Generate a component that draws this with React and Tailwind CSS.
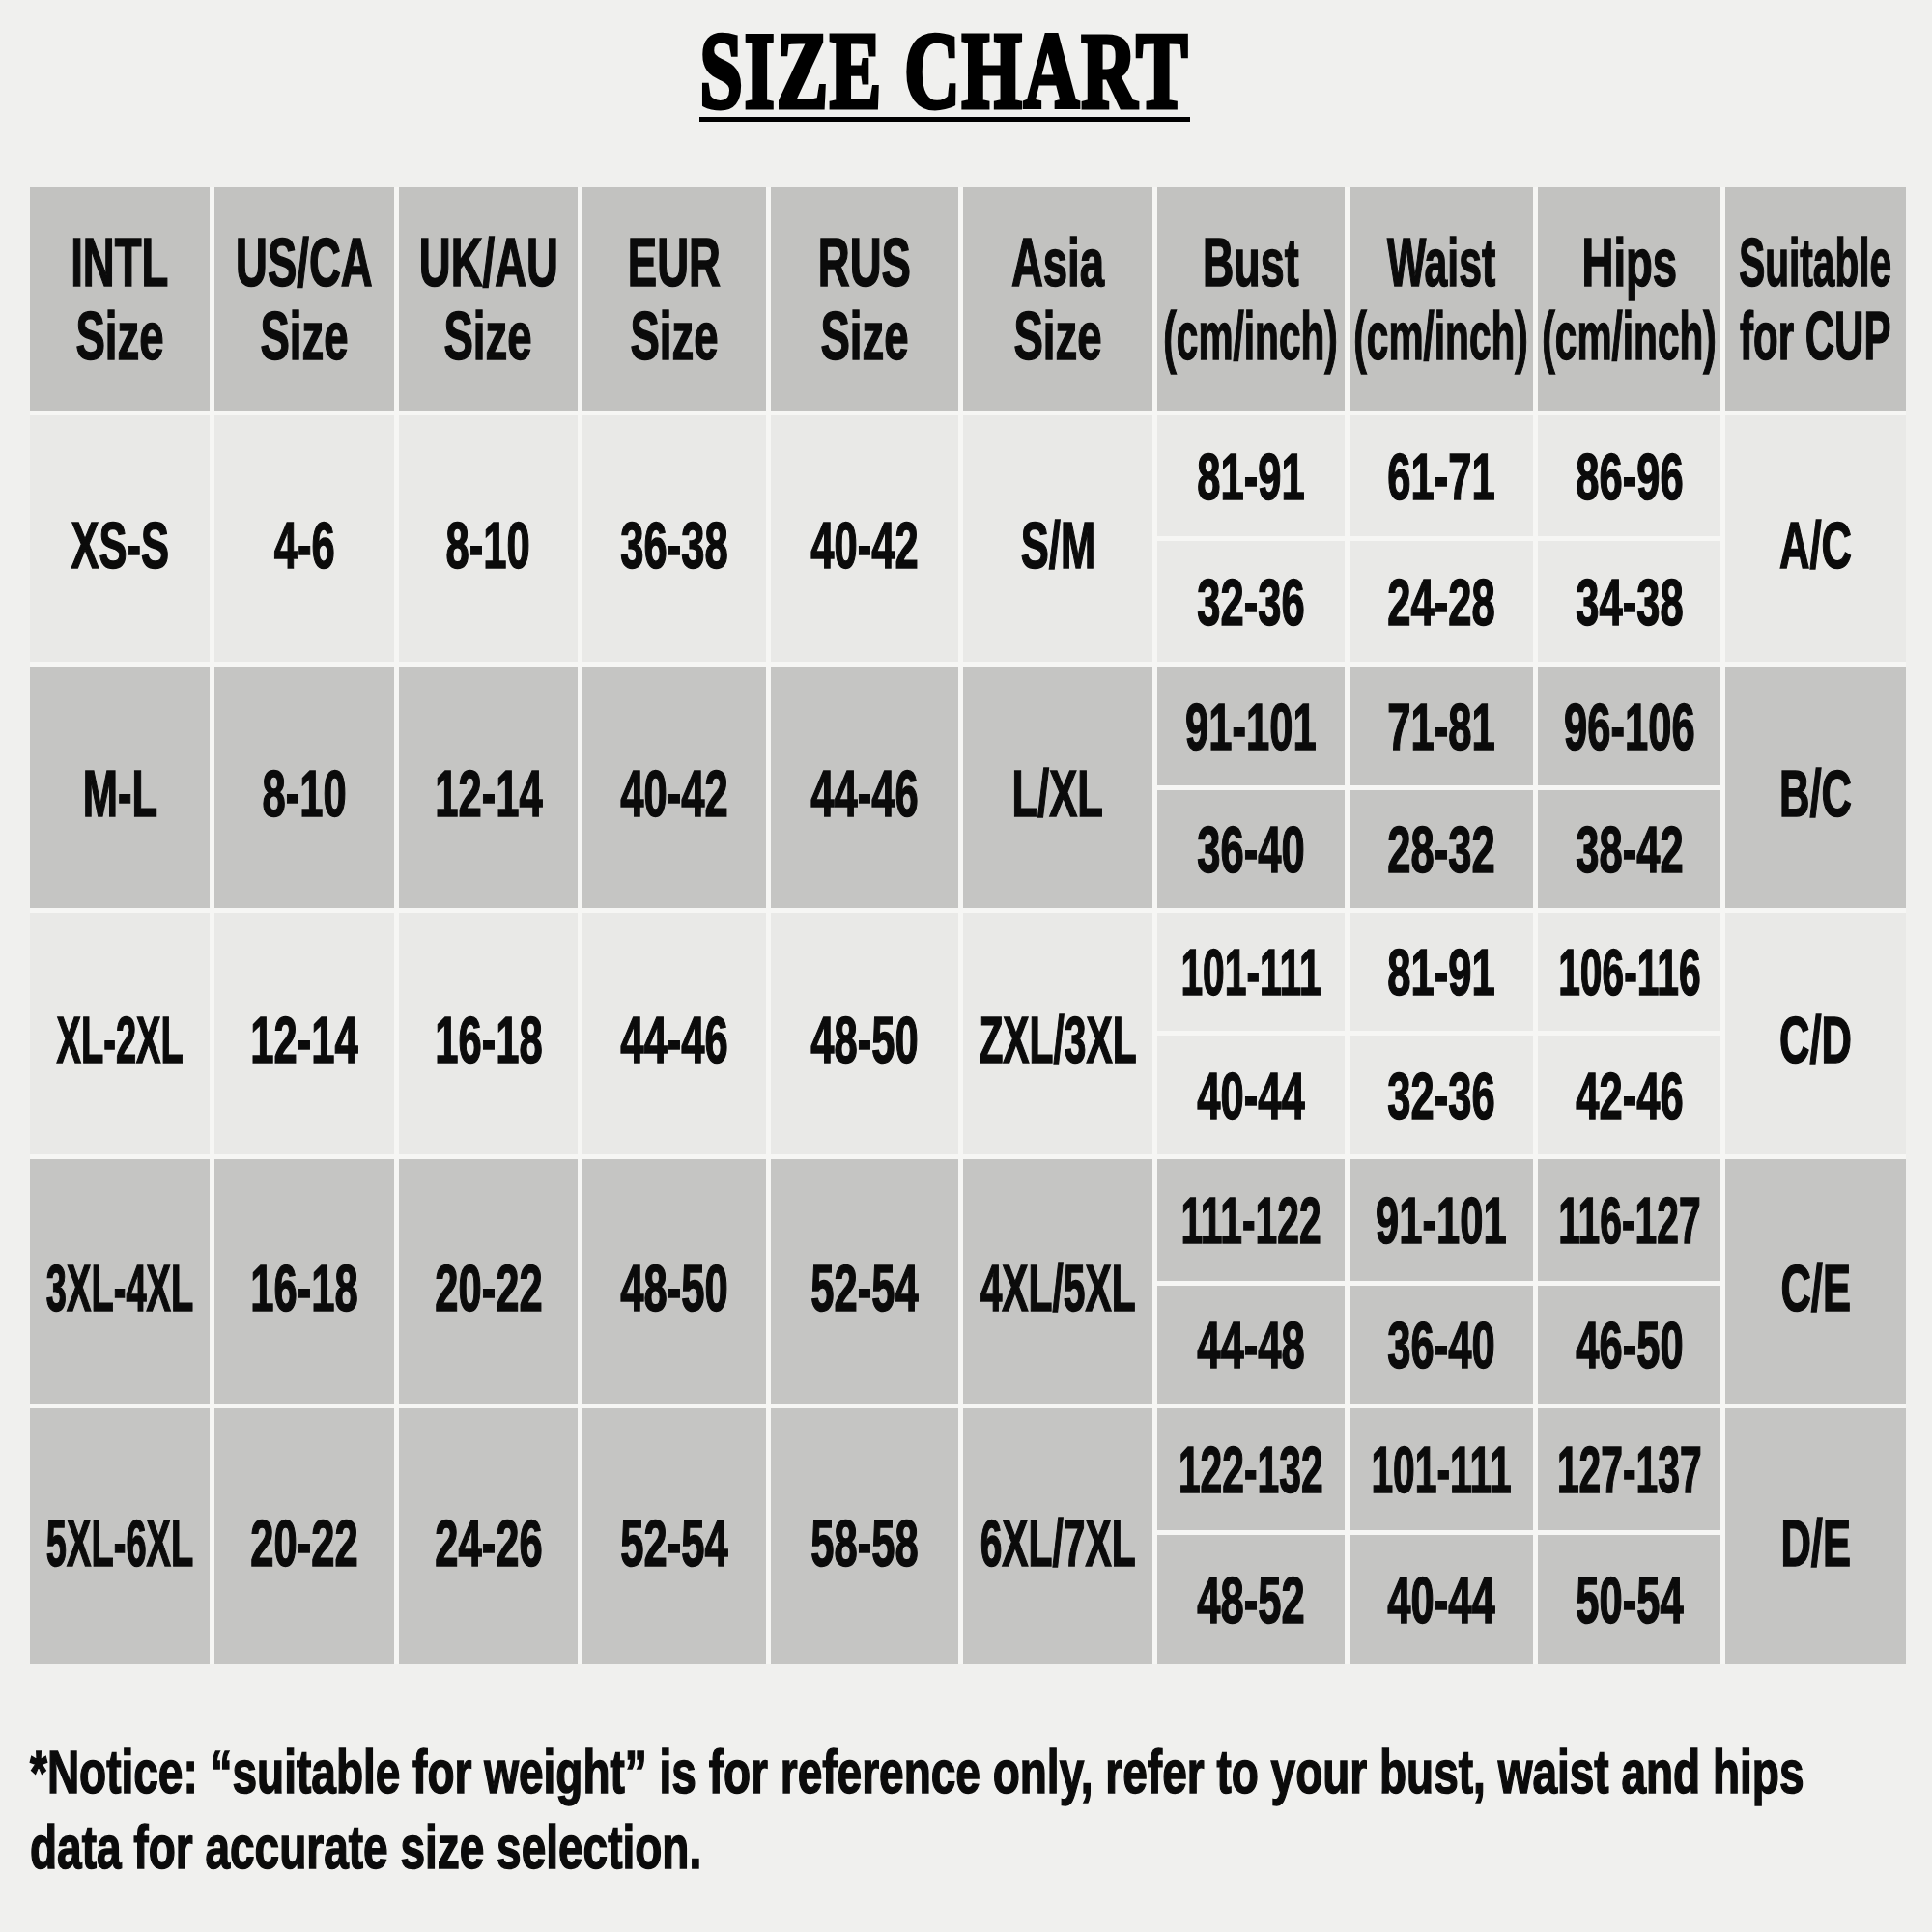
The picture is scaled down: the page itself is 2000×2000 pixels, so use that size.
import React from "react";

const LIGHT = "bg-[#e9e9e7]";
const DARK = "bg-[#c5c5c3]";

const headers = [
  [["INTL", "scale-x-[0.65]"], ["Size", "scale-x-[0.65]"]],
  [["US/CA", "scale-x-[0.65]"], ["Size", "scale-x-[0.65]"]],
  [["UK/AU", "scale-x-[0.65]"], ["Size", "scale-x-[0.65]"]],
  [["EUR", "scale-x-[0.65]"], ["Size", "scale-x-[0.65]"]],
  [["RUS", "scale-x-[0.65]"], ["Size", "scale-x-[0.65]"]],
  [["Asia", "scale-x-[0.65]"], ["Size", "scale-x-[0.65]"]],
  [["Bust", "scale-x-[0.64]"], ["(cm/inch)", "scale-x-[0.58]"]],
  [["Waist", "scale-x-[0.61]"], ["(cm/inch)", "scale-x-[0.58]"]],
  [["Hips", "scale-x-[0.65]"], ["(cm/inch)", "scale-x-[0.58]"]],
  [["Suitable", "scale-x-[0.58]"], ["for CUP", "scale-x-[0.6]"]],
];

const rows = [
  { bg: LIGHT, sizes: ["XS-S", "4-6", "8-10", "36-38", "40-42", "S/M"], bust: ["81-91", "32-36"], waist: ["61-71", "24-28"], hips: ["86-96", "34-38"], cup: "A/C" },
  { bg: DARK, sizes: ["M-L", "8-10", "12-14", "40-42", "44-46", "L/XL"], bust: ["91-101", "36-40"], waist: ["71-81", "28-32"], hips: ["96-106", "38-42"], cup: "B/C" },
  { bg: LIGHT, sizes: ["XL-2XL", "12-14", "16-18", "44-46", "48-50", "ZXL/3XL"], bust: ["101-111", "40-44"], waist: ["81-91", "32-36"], hips: ["106-116", "42-46"], cup: "C/D" },
  { bg: DARK, sizes: ["3XL-4XL", "16-18", "20-22", "48-50", "52-54", "4XL/5XL"], bust: ["111-122", "44-48"], waist: ["91-101", "36-40"], hips: ["116-127", "46-50"], cup: "C/E" },
  { bg: DARK, sizes: ["5XL-6XL", "20-22", "24-26", "52-54", "58-58", "6XL/7XL"], bust: ["122-132", "48-52"], waist: ["101-111", "40-44"], hips: ["127-137", "50-54"], cup: "D/E" },
];

// squeeze long labels a bit more, like the narrow face in the picture
const squeeze = (t) => {
  if (t.includes("XL-")) return "scale-x-[0.56]";
  if (t.length >= 7) return "scale-x-[0.6]";
  return "scale-x-[0.64]";
};

const txt = "font-['Liberation_Sans',Arial,sans-serif] font-bold text-[#0b0b0b] [-webkit-text-stroke:1.5px_#0b0b0b]";

const Cell = ({ text, bg, tall }) => (
  <div className={`${bg} flex items-center justify-center ${tall ? "row-span-2 pt-[12px]" : ""}`}>
    <span className={`inline-block whitespace-nowrap text-[68px] leading-[68px] ${txt} ${squeeze(text)}`}>
      {text}
    </span>
  </div>
);

export default function App() {
  return (
    <div className="w-[2000px] h-[2000px] overflow-hidden bg-[#f0f0ee]">
      {/* Title */}
      <div className="flex flex-col items-center pt-[25px] pr-[44px]">
        <span className="inline-block whitespace-nowrap font-['Liberation_Serif','Times_New_Roman',serif] font-bold text-[112px] leading-[96px] tracking-[3px] text-black [-webkit-text-stroke:5px_#000] scale-x-[0.71]">
          SIZE CHART
        </span>
        <div className="w-[508px] h-[5px] bg-black" />
      </div>

      {/* Table */}
      <div className="mt-[68px] pl-[31px]">
        <div className="inline-grid grid-cols-[186px_186px_185px_190px_194px_196px_194px_190px_189px_187px] grid-rows-[231px_125px_125px_123px_122px_122px_123px_126px_122px_126px_134px] gap-[5px] bg-[#f6f6f4]">
          {headers.map((lines, i) => (
            <div key={"h" + i} className="bg-[#c2c2c0] flex flex-col items-center justify-center">
              {lines.map(([t, s]) => (
                <span key={t} className={`inline-block whitespace-nowrap text-[70px] leading-[76px] ${txt} ${s}`}>
                  {t}
                </span>
              ))}
            </div>
          ))}

          {rows.map((r, ri) => (
            <React.Fragment key={ri}>
              {r.sizes.map((s, ci) => (
                <Cell key={"s" + ci} text={s} bg={r.bg} tall />
              ))}
              <Cell text={r.bust[0]} bg={r.bg} />
              <Cell text={r.waist[0]} bg={r.bg} />
              <Cell text={r.hips[0]} bg={r.bg} />
              <Cell text={r.cup} bg={r.bg} tall />
              <Cell text={r.bust[1]} bg={r.bg} />
              <Cell text={r.waist[1]} bg={r.bg} />
              <Cell text={r.hips[1]} bg={r.bg} />
            </React.Fragment>
          ))}
        </div>
      </div>

      {/* Notice */}
      <div className={`mt-[72px] pl-[31px] text-[63px] leading-[78px] ${txt}`}>
        <div className="whitespace-nowrap origin-left scale-x-[0.73]">
          *Notice: “suitable for weight” is for reference only, refer to your bust, waist and hips
        </div>
        <div className="whitespace-nowrap origin-left scale-x-[0.73]">
          data for accurate size selection.
        </div>
      </div>
    </div>
  );
}
